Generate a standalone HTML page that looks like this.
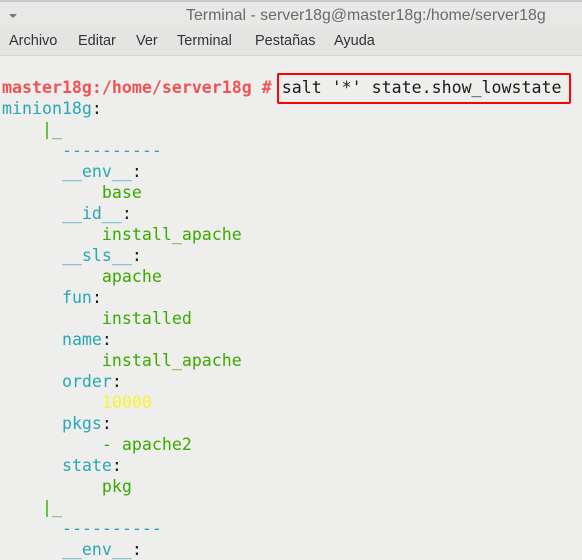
<!DOCTYPE html>
<html><head><style>
body{margin:0;width:582px;height:560px;overflow:hidden;background:#eeeeec;font-family:"Liberation Sans",sans-serif;position:relative}
#title{position:absolute;left:0;top:0;width:582px;height:28px;background:#e8e8e7;border-top:2px solid #c8c8c8;box-sizing:border-box}
#title .t{position:absolute;left:186px;top:5px;font-size:15.9px;color:#6a6a6a}
#title .arr{position:absolute;left:9px;top:12px;width:0;height:0;border-left:4px solid transparent;border-right:4px solid transparent;border-top:4px solid #777}
#menu{position:absolute;left:0;top:28px;width:582px;height:27px;background:#e4e4e3;border-bottom:1px solid #d6d6d6}
#menu span{position:absolute;top:5px;font-size:14.5px;color:#333}
pre{position:absolute;left:2px;top:77px;margin:0;font-family:"DejaVu Sans Mono","Liberation Mono",monospace;font-size:16.6px;line-height:21px;color:#1a1a1a}
.r{color:#ef5454;font-weight:bold}.c{color:#27a8b4}.g{color:#3aaa00}.y{color:#f5f535}
#box{position:absolute;left:277px;top:73px;width:290px;height:27px;border:2.5px solid #f00;border-radius:2px}
</style></head><body>
<div id="title"><div class="arr"></div><div class="t">Terminal - server18g@master18g:/home/server18g</div></div>
<div id="menu"><span style="left:9px">Archivo</span><span style="left:78px">Editar</span><span style="left:136px">Ver</span><span style="left:177px">Terminal</span><span style="left:255px">Pestañas</span><span style="left:334px">Ayuda</span></div>
<pre><span class="r">master18g:/home/server18g #</span> salt '*' state.show_lowstate
<span class="c">minion18g</span>:
    <span class="g">|_</span>
      <span class="c">----------</span>
      <span class="c">__env__</span>:
          <span class="g">base</span>
      <span class="c">__id__</span>:
          <span class="g">install_apache</span>
      <span class="c">__sls__</span>:
          <span class="g">apache</span>
      <span class="c">fun</span>:
          <span class="g">installed</span>
      <span class="c">name</span>:
          <span class="g">install_apache</span>
      <span class="c">order</span>:
          <span class="y">10000</span>
      <span class="c">pkgs</span>:
          <span class="g">- apache2</span>
      <span class="c">state</span>:
          <span class="g">pkg</span>
    <span class="g">|_</span>
      <span class="c">----------</span>
      <span class="c">__env__</span>:</pre>
<div id="box"></div>
</body></html>
